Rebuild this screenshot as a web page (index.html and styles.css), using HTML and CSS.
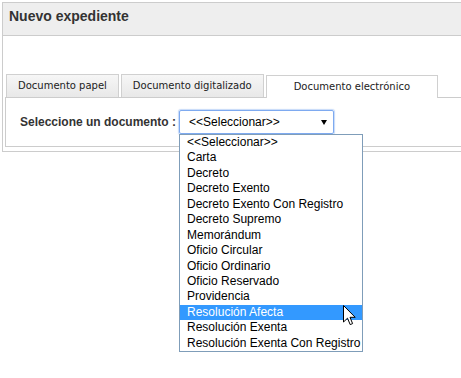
FILE: index.html
```html
<!DOCTYPE html>
<html>
<head>
    <meta charset="UTF-8">
    <title>Nuevo expediente</title>
    <link rel="stylesheet" href="styles.css">
</head>
<body>
    <div class="panel">
        <div class="panel-header">Nuevo expediente</div>
        <div class="panel-body">
            <ul class="tabs">
                <li class="tab">Documento papel</li>
                <li class="tab">Documento digitalizado</li>
                <li class="tab active">Documento electrónico</li>
            </ul>
            <div class="tab-content">
                <label class="field-label">Seleccione un documento :</label>
                <div class="select-wrap">
                    <div class="select">
                        <span>&lt;&lt;Seleccionar&gt;&gt;</span>
                        <span class="arrow"></span>
                    </div>
                    <ul class="dropdown">
                        <li>&lt;&lt;Seleccionar&gt;&gt;</li>
                        <li>Carta</li>
                        <li>Decreto</li>
                        <li>Decreto Exento</li>
                        <li>Decreto Exento Con Registro</li>
                        <li>Decreto Supremo</li>
                        <li>Memorándum</li>
                        <li>Oficio Circular</li>
                        <li>Oficio Ordinario</li>
                        <li>Oficio Reservado</li>
                        <li>Providencia</li>
                        <li class="selected">Resolución Afecta</li>
                        <li>Resolución Exenta</li>
                        <li>Resolución Exenta Con Registro</li>
                    </ul>
                    <!-- puntero del ratón sobre la lista -->
                    <svg class="cursor" width="13" height="21" viewBox="0 0 13 21">
                        <path d="M0.5 0.5 V17 L4.5 13.2 L7.2 19.6 L9.6 18.6 L7 12.3 H12.2 Z" fill="#fff" stroke="#000" stroke-width="1" stroke-linejoin="miter"/>
                    </svg>
                </div>
            </div>
        </div>
    </div>
</body>
</html>
```

FILE: styles.css
```css
html {
    height: 100%;
}

body {
    margin: 0;
    min-height: 100%;
    font-family: "Liberation Sans", Arial, sans-serif;
    background-color: #fff;
}

.panel {
    margin: 2px 0 0 2px;
    border: 1px solid #ccc;
    border-right: none;
}

.panel-header {
    background-color: #eee;
    border-bottom: 1px solid #ccc;
    padding: 5px 6px 11px;
    font-size: 14px;
    line-height: 16px;
    font-weight: bold;
    color: #333;
}

.panel-body {
    padding: 38px 0 4px 2px;
}

.tabs {
    list-style: none;
    margin: 0 0 0 1px;
    padding: 0;
    display: flex;
    align-items: flex-end;
    gap: 2px;
}

.tab {
    font-family: "DejaVu Sans", Verdana, sans-serif;
    font-size: 10px;
    line-height: 22px;
    height: 22px;
    padding: 0 11px;
    color: #222;
    border: 1px solid #d0d0d0;
    border-bottom: none;
    background: linear-gradient(#f6f6f6, #e8e8e8);
}

.tab.active {
    background: #fff;
    padding: 0 27px;
    margin-bottom: -1px;
    position: relative;
}

.tab-content {
    border: 1px solid #ccc;
    border-right: none;
    padding: 12px 0 12px 14px;
    display: flex;
    align-items: center;
    gap: 3px;
}

.field-label {
    font-size: 12px;
    font-weight: bold;
    color: #333;
}

.select-wrap {
    position: relative;
}

.select {
    box-sizing: border-box;
    width: 155px;
    height: 24px;
    border: 1px solid #7eaaf0;
    border-radius: 2px;
    box-shadow: 0 0 1px 1px rgba(126, 170, 240, 0.45);
    padding: 0 6px 0 9px;
    display: flex;
    align-items: center;
    justify-content: space-between;
    font-size: 12px;
    color: #000;
}

.arrow {
    width: 0;
    height: 0;
    border-left: 3px solid transparent;
    border-right: 3px solid transparent;
    border-top: 5px solid #000;
}

.dropdown {
    position: absolute;
    top: 100%;
    left: 0;
    width: 182px;
    margin: 0;
    padding: 0;
    list-style: none;
    background-color: #fff;
    border: 1px solid #7f9db9;
    z-index: 2;
}

.dropdown li {
    height: 15.45px;
    line-height: 15.45px;
    padding: 0 7px;
    font-size: 12px;
    color: #000;
    white-space: nowrap;
}

.dropdown li.selected {
    background-color: #3399ff; /* Azul de selección */
    color: #fff;
}

.cursor {
    position: absolute;
    left: 164px;
    top: 195px;
    z-index: 3;
}
```
